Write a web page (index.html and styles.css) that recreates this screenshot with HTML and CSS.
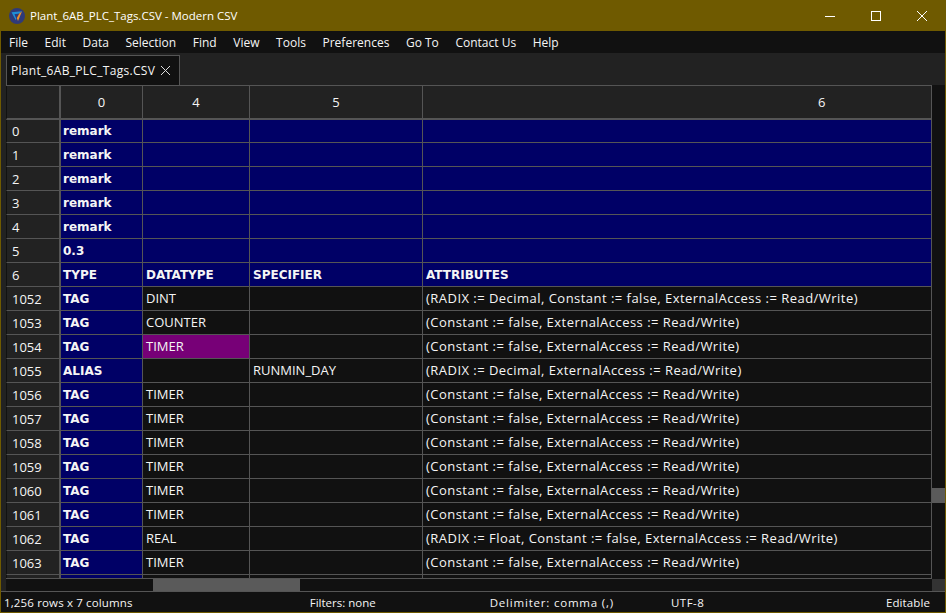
FILE: index.html
```html
<!DOCTYPE html>
<html lang="en">
<head>
  <meta charset="UTF-8" />
  <title>Plant_6AB_PLC_Tags.CSV - Modern CSV</title>
  <link rel="stylesheet" href="styles.css">
</head>
<body>
  <div class="window">
    <div class="titlebar">
      <svg class="logo" width="16" height="16" viewBox="0 0 16 16">
        <circle cx="8" cy="8" r="8" fill="#2f3a78"/>
        <path d="M2.5 4.2 L13 3.2 L10.4 5.6 L5.6 6.2 L7.4 11 L6.6 12 Z" fill="#1f8fd6"/>
        <path d="M13 3.2 L9 13 L7.8 10 L10.4 5.6 Z" fill="#ee8f2a"/>
        <path d="M5.6 6.2 L8.4 6 L7.4 9.4 Z" fill="#2f3a78"/>
      </svg>
      <span class="title">Plant_6AB_PLC_Tags.CSV - Modern CSV</span>
      <div class="winbtns">
        <svg width="10" height="10" viewBox="0 0 10 10"><path d="M0 5.5H10" stroke="#fff" stroke-width="1"/></svg>
        <svg width="10" height="10" viewBox="0 0 10 10"><rect x="0.5" y="0.5" width="9" height="9" fill="none" stroke="#fff" stroke-width="1"/></svg>
        <svg width="10" height="10" viewBox="0 0 10 10"><path d="M0 0L10 10M10 0L0 10" stroke="#fff" stroke-width="1"/></svg>
      </div>
    </div>

    <div class="menubar">
      <span>File</span><span>Edit</span><span>Data</span><span>Selection</span><span>Find</span><span>View</span><span>Tools</span><span>Preferences</span><span>Go To</span><span>Contact Us</span><span>Help</span>
    </div>

    <div class="tabs">
      <div class="tab">
        Plant_6AB_PLC_Tags.CSV
        <svg width="9" height="9" viewBox="0 0 9 9"><path d="M0 0L9 9M9 0L0 9" stroke="#ddd" stroke-width="1"/></svg>
      </div>
    </div>

    <div class="sheet">
      <div class="gridwrap">
        <div class="grid">
          <div class="row head"><div class="n"></div><div class="c0">0</div><div class="c1">4</div><div class="c2">5</div><div class="c3">6</div></div>

          <div class="row hl"><div class="n">0</div><div class="c0">remark</div><div class="c1"></div><div class="c2"></div><div class="c3"></div></div>
          <div class="row hl"><div class="n">1</div><div class="c0">remark</div><div class="c1"></div><div class="c2"></div><div class="c3"></div></div>
          <div class="row hl"><div class="n">2</div><div class="c0">remark</div><div class="c1"></div><div class="c2"></div><div class="c3"></div></div>
          <div class="row hl"><div class="n">3</div><div class="c0">remark</div><div class="c1"></div><div class="c2"></div><div class="c3"></div></div>
          <div class="row hl"><div class="n">4</div><div class="c0">remark</div><div class="c1"></div><div class="c2"></div><div class="c3"></div></div>
          <div class="row hl"><div class="n">5</div><div class="c0">0.3</div><div class="c1"></div><div class="c2"></div><div class="c3"></div></div>
          <div class="row hl"><div class="n">6</div><div class="c0">TYPE</div><div class="c1">DATATYPE</div><div class="c2">SPECIFIER</div><div class="c3">ATTRIBUTES</div></div>

          <div class="row"><div class="n">1052</div><div class="c0">TAG</div><div class="c1">DINT</div><div class="c2"></div><div class="c3">(RADIX := Decimal, Constant := false, ExternalAccess := Read/Write)</div></div>
          <div class="row"><div class="n">1053</div><div class="c0">TAG</div><div class="c1">COUNTER</div><div class="c2"></div><div class="c3">(Constant := false, ExternalAccess := Read/Write)</div></div>
          <div class="row"><div class="n">1054</div><div class="c0">TAG</div><div class="c1 current">TIMER</div><div class="c2"></div><div class="c3">(Constant := false, ExternalAccess := Read/Write)</div></div>
          <div class="row"><div class="n">1055</div><div class="c0">ALIAS</div><div class="c1"></div><div class="c2">RUNMIN_DAY</div><div class="c3">(RADIX := Decimal, ExternalAccess := Read/Write)</div></div>
          <div class="row"><div class="n">1056</div><div class="c0">TAG</div><div class="c1">TIMER</div><div class="c2"></div><div class="c3">(Constant := false, ExternalAccess := Read/Write)</div></div>
          <div class="row"><div class="n">1057</div><div class="c0">TAG</div><div class="c1">TIMER</div><div class="c2"></div><div class="c3">(Constant := false, ExternalAccess := Read/Write)</div></div>
          <div class="row"><div class="n">1058</div><div class="c0">TAG</div><div class="c1">TIMER</div><div class="c2"></div><div class="c3">(Constant := false, ExternalAccess := Read/Write)</div></div>
          <div class="row"><div class="n">1059</div><div class="c0">TAG</div><div class="c1">TIMER</div><div class="c2"></div><div class="c3">(Constant := false, ExternalAccess := Read/Write)</div></div>
          <div class="row"><div class="n">1060</div><div class="c0">TAG</div><div class="c1">TIMER</div><div class="c2"></div><div class="c3">(Constant := false, ExternalAccess := Read/Write)</div></div>
          <div class="row"><div class="n">1061</div><div class="c0">TAG</div><div class="c1">TIMER</div><div class="c2"></div><div class="c3">(Constant := false, ExternalAccess := Read/Write)</div></div>
          <div class="row"><div class="n">1062</div><div class="c0">TAG</div><div class="c1">REAL</div><div class="c2"></div><div class="c3">(RADIX := Float, Constant := false, ExternalAccess := Read/Write)</div></div>
          <div class="row"><div class="n">1063</div><div class="c0">TAG</div><div class="c1">TIMER</div><div class="c2"></div><div class="c3">(Constant := false, ExternalAccess := Read/Write)</div></div>
          <div class="row"><div class="n"></div><div class="c0"></div><div class="c1"></div><div class="c2"></div><div class="c3"></div></div>
        </div>
        <div class="hscroll"><div class="hthumb"></div></div>
      </div>
      <div class="vscroll"><div class="vthumb"></div><div class="vend"></div></div>
    </div>

    <div class="statusbar">
      <span class="st-rows">1,256 rows x 7 columns</span>
      <span class="st-filters">Filters: none</span>
      <span class="st-delim">Delimiter: comma (,)</span>
      <span class="st-enc">UTF-8</span>
      <span class="st-edit">Editable</span>
    </div>
  </div>
</body>
</html>
```

FILE: styles.css
```css
html, body {
  margin: 0;
  height: 100%;
  background: #111;
}
body {
  font-family: "Open Sans", "Noto Sans", sans-serif;
  font-size: 12px;
  color: #f5f5f5;
  overflow: hidden;
}
.window {
  box-sizing: border-box;
  width: 946px;
  height: 613px;
  display: flex;
  flex-direction: column;
  border: 1px solid #6f5a00;
  border-top: 0;
}
.titlebar {
  height: 31px;
  flex: none;
  display: flex;
  align-items: center;
  background: #6f5a00;
  padding-left: 8px;
}
.title {
  margin-left: 5px;
  font-size: 11.5px;
  color: #fff;
}
.winbtns {
  margin-left: auto;
  display: flex;
  align-items: center;
  gap: 36px;
  padding-right: 18px;
}
.winbtns svg {
  display: block;
}
.menubar {
  height: 22px;
  flex: none;
  display: flex;
  align-items: center;
  gap: 16.6px;
  padding-left: 8px;
  background: #111;
}
.tabs {
  height: 32px;
  flex: none;
  box-sizing: border-box;
  background: #222;
  padding: 2px 0 0 5px;
}
.tab {
  box-sizing: border-box;
  width: 174px;
  height: 30px;
  display: flex;
  align-items: center;
  gap: 6px;
  padding-left: 4px;
  background: #111;
  border: 1px solid #555;
  border-bottom: 0;
  letter-spacing: 0.3px;
}
.sheet {
  flex: 1;
  min-height: 0;
  display: flex;
  background: #222;
  padding-left: 5px;
  border-bottom: 1px solid #555;
}
.gridwrap {
  width: 926px;
  display: flex;
  flex-direction: column;
  border-top: 1px solid #555;
}
.grid {
  box-sizing: border-box;
  height: 493px;
  overflow: hidden;
  border-bottom: 1px solid #555;
}
.row {
  display: grid;
  grid-template-columns: 55px 82px 107px 173px 1fr;
  height: 24px;
  background: #111;
  font-size: 13px;
}
.row > div {
  box-sizing: border-box;
  display: flex;
  align-items: center;
  padding: 0 0 2px 3px;
  border-right: 1px solid #555;
  border-bottom: 1px solid #555;
  white-space: nowrap;
}
.row .c3 {
  letter-spacing: 0.47px;
}
.row .n {
  background: #222;
  padding: 0 0 0 5px;
  font-size: 13px;
  border-right: 2px solid #555;
  border-left: 1px solid #111;
}
.row .c0 {
  background: #000066;
  padding: 0 0 0 2px;
  font-family: "DejaVu Sans", sans-serif;
  font-weight: bold;
  font-size: 12px;
}
.row.hl > div:not(.n) {
  padding-bottom: 0;
  background: #000066;
  font-family: "DejaVu Sans", sans-serif;
  font-weight: bold;
  font-size: 12px;
  letter-spacing: 0;
}
.row.hl .c1 {
  letter-spacing: 0.35px;
}
.row.hl .c3 {
  letter-spacing: 0.2px;
}
.row.head {
  height: 34px;
  margin-bottom: -1px;
  position: relative;
}
.row.head > div {
  background: #222;
  justify-content: center;
  padding: 0;
  border-bottom: 2px solid #555;
}
.row.head .c0 {
  font-family: inherit;
  font-weight: normal;
  font-size: 13px;
}
.row.head .c3 {
  justify-content: flex-start;
  padding-left: 395px;
}
.row .current {
  background: #770077;
}
.hscroll {
  height: 12px;
  flex: none;
  background: #111;
  padding-left: 147px;
}
.hthumb {
  width: 147px;
  height: 100%;
  background: #5a5a5a;
}
.vscroll {
  flex: 1;
  position: relative;
  background: #111;
}
.vthumb {
  position: absolute;
  top: 403px;
  left: 0;
  right: 0;
  height: 15px;
  background: #5a5a5a;
}
.vend {
  position: absolute;
  bottom: 0;
  left: 0;
  right: 0;
  height: 12px;
  background: #333;
}
.statusbar {
  height: 20px;
  flex: none;
  display: flex;
  align-items: center;
  background: #111;
  font-size: 11.5px;
  padding-left: 3px;
}
.st-rows { letter-spacing: 0.15px; }
.st-filters { margin-left: 177px; }
.st-delim { margin-left: 114px; letter-spacing: 0.8px; }
.st-enc { margin-left: 57px; letter-spacing: 0.5px; }
.st-edit { margin-left: auto; padding-right: 15px; letter-spacing: 0.1px; }
```
